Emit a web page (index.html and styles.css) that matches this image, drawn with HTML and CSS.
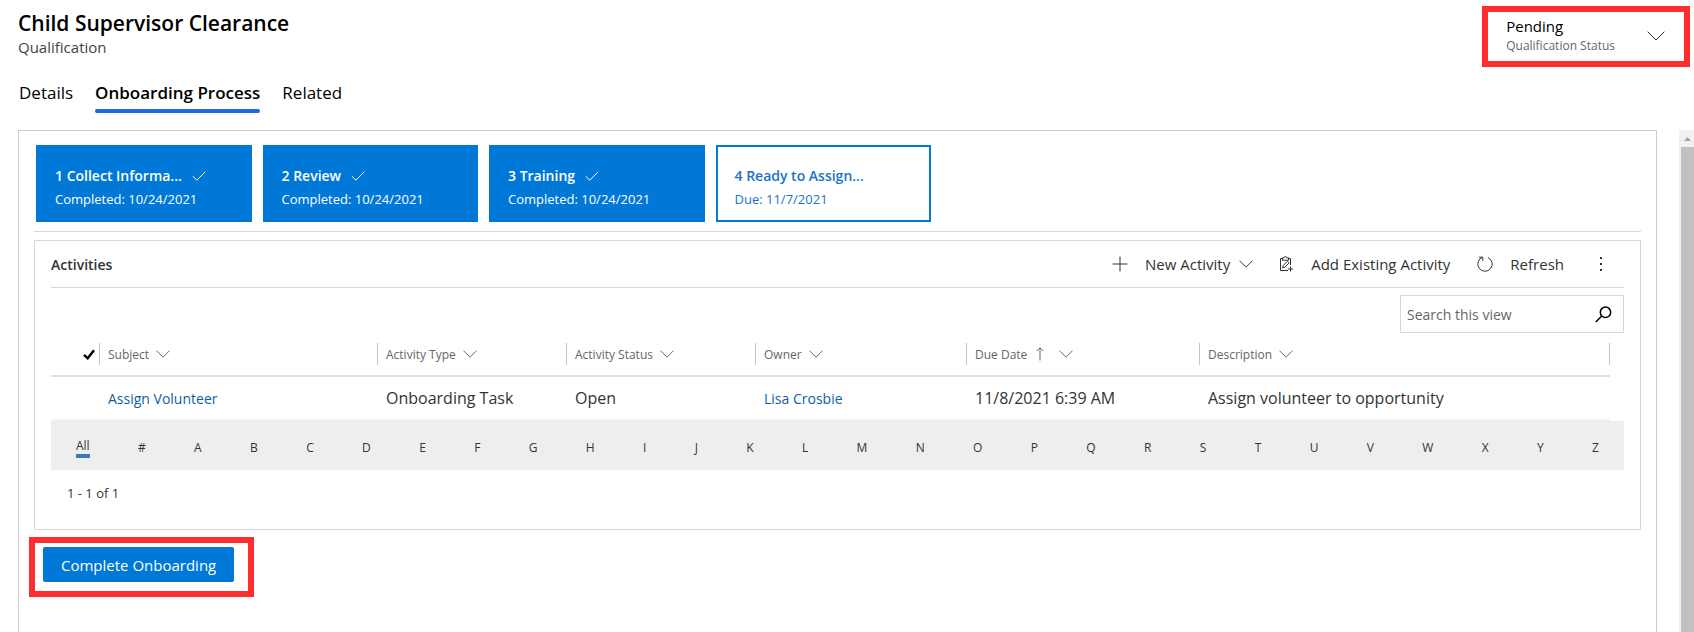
FILE: index.html
```html
<!DOCTYPE html>
<html lang="en">
<head>
<meta charset="utf-8">
<title>Child Supervisor Clearance</title>
<link rel="stylesheet" href="styles.css">
</head>
<body>
<svg class="sprite" aria-hidden="true">
  <symbol id="chevron" viewBox="0 0 14 8"><path d="M.5.7 7 7.2 13.5.7"/></symbol>
  <symbol id="check" viewBox="0 0 14 10"><path d="M.8 5.2 4.9 9.2 13.2.8"/></symbol>
</svg>
<div class="page">
  <header class="record-header">
    <div>
      <h1 class="record-title">Child Supervisor Clearance</h1>
      <p class="record-type">Qualification</p>
    </div>
    <button class="status highlight" type="button">
      <span class="status-text">
        <span class="status-value">Pending</span>
        <span class="status-label">Qualification Status</span>
      </span>
      <svg class="status-chevron" viewBox="0 0 18 10"><path d="M.6.7 9 9.1 17.4.7"/></svg>
    </button>
  </header>
  <nav class="tabs">
    <a class="tab" href="#details">Details</a>
    <a class="tab tab-active" href="#onboarding" aria-current="page">Onboarding Process</a>
    <a class="tab" href="#related">Related</a>
  </nav>
  <div class="viewport">
    <main class="form">
      <div class="process">
        <ol class="stages">
          <li class="stage"><div class="stage-title"><span class="stage-name">1 Collect Informa...</span><svg class="check"><use href="#check"/></svg></div><div class="stage-date">Completed: 10/24/2021</div></li>
          <li class="stage"><div class="stage-title"><span class="stage-name">2 Review</span><svg class="check"><use href="#check"/></svg></div><div class="stage-date">Completed: 10/24/2021</div></li>
          <li class="stage"><div class="stage-title"><span class="stage-name">3 Training</span><svg class="check"><use href="#check"/></svg></div><div class="stage-date">Completed: 10/24/2021</div></li>
          <li class="stage stage-current"><div class="stage-title"><span class="stage-name">4 Ready to Assign...</span></div><div class="stage-date">Due: 11/7/2021</div></li>
        </ol>
      </div>
      <section class="activities">
        <div class="toolbar">
          <h2 class="section-title">Activities</h2>
          <button class="command command-new" type="button">
            <svg class="icon" viewBox="0 0 16 16"><path d="M8 .5v15M.5 8h15"/></svg>
            <span>New Activity</span>
            <svg class="chevron"><use href="#chevron"/></svg>
          </button>
          <button class="command command-add" type="button">
            <svg class="icon" viewBox="0 0 16 16"><path d="M4.500 2.500h-2v12H10M10.500 2.500h2V9M4.500 1.800h1.700a1.300 1.300 0 0 1 2.600 0h1.700v2.400h-6zM4.500 12l.8-2.600 4.200-4.200 1.600 1.600-4.200 4.400zM12.500 10.500v5M10 13h5"/></svg>
            <span>Add Existing Activity</span>
          </button>
          <button class="command command-refresh" type="button">
            <svg class="icon" viewBox="0 0 16 16"><path d="M5.500 1.300a7.200 7.200 0 1 0 5.500.2M2 1.200h3.800V5"/></svg>
            <span>Refresh</span>
          </button>
          <button class="more" type="button" aria-label="More commands">
            <svg class="dots" viewBox="0 0 2 14"><path d="M0 0h2v2H0zM0 6h2v2H0zM0 12h2v2H0z"/></svg>
          </button>
        </div>
        <form class="search">
          <input class="search-input" type="text" placeholder="Search this view" aria-label="Search this view">
          <button class="search-button" type="button" aria-label="Search">
            <svg class="search-icon" viewBox="0 0 17 17"><circle cx="10.500" cy="6.300" r="5.200"/><path d="M6.800 10 .8 16"/></svg>
          </button>
        </form>
        <table class="grid">
          <colgroup><col class="col-check"><col class="col-subject"><col class="col-type"><col class="col-type"><col class="col-owner"><col class="col-due"><col></colgroup>
          <thead>
            <tr>
              <th class="select-all"><svg class="tick" viewBox="0 0 12 11"><path d="M1 5.800 4.700 9.300 11 1.200"/></svg></th>
              <th><span class="column">Subject <svg class="chevron"><use href="#chevron"/></svg></span></th>
              <th><span class="column">Activity Type <svg class="chevron"><use href="#chevron"/></svg></span></th>
              <th><span class="column">Activity Status <svg class="chevron"><use href="#chevron"/></svg></span></th>
              <th><span class="column">Owner <svg class="chevron"><use href="#chevron"/></svg></span></th>
              <th><span class="column">Due Date <svg class="sort" viewBox="0 0 8 14"><path d="M4 13.500V.8M.8 4 4 .8 7.200 4"/></svg> <svg class="chevron"><use href="#chevron"/></svg></span></th>
              <th><span class="column column-last">Description <svg class="chevron"><use href="#chevron"/></svg></span></th>
            </tr>
          </thead>
          <tbody>
            <tr>
              <td></td>
              <td><a class="record-link" href="#task">Assign Volunteer</a></td>
              <td>Onboarding Task</td>
              <td>Open</td>
              <td><a class="record-link" href="#owner">Lisa Crosbie</a></td>
              <td>11/8/2021 6:39 AM</td>
              <td>Assign volunteer to opportunity</td>
            </tr>
          </tbody>
        </table>
        <div class="jump-bar">
          <button class="jump jump-active" type="button">All</button>
          <button class="jump" type="button">#</button>
          <button class="jump" type="button">A</button>
          <button class="jump" type="button">B</button>
          <button class="jump" type="button">C</button>
          <button class="jump" type="button">D</button>
          <button class="jump" type="button">E</button>
          <button class="jump" type="button">F</button>
          <button class="jump" type="button">G</button>
          <button class="jump" type="button">H</button>
          <button class="jump" type="button">I</button>
          <button class="jump" type="button">J</button>
          <button class="jump" type="button">K</button>
          <button class="jump" type="button">L</button>
          <button class="jump" type="button">M</button>
          <button class="jump" type="button">N</button>
          <button class="jump" type="button">O</button>
          <button class="jump" type="button">P</button>
          <button class="jump" type="button">Q</button>
          <button class="jump" type="button">R</button>
          <button class="jump" type="button">S</button>
          <button class="jump" type="button">T</button>
          <button class="jump" type="button">U</button>
          <button class="jump" type="button">V</button>
          <button class="jump" type="button">W</button>
          <button class="jump" type="button">X</button>
          <button class="jump" type="button">Y</button>
          <button class="jump" type="button">Z</button>
        </div>
        <p class="paging">1 - 1 of 1</p>
      </section>
      <div class="action highlight">
        <button class="primary" type="button">Complete Onboarding</button>
      </div>
    </main>
    <div class="scrollbar">
      <svg class="scroll-arrow" viewBox="0 0 7 4"><path d="M3.500 0 7 4H0z"/></svg>
      <div class="scroll-thumb"></div>
    </div>
  </div>
</div>
</body>
</html>
```
FILE: styles.css
```css
* { box-sizing: border-box; }

body {
  margin: 0;
  background: #fff;
  color: #333;
  font-family: "Open Sans", "Noto Sans", sans-serif;
  font-size: 14px;
}

h1, h2, p, ol { margin: 0; padding: 0; }

button {
  border: 0;
  padding: 0;
  background: none;
  color: inherit;
  font: inherit;
  cursor: pointer;
}

a { text-decoration: none; }

svg { fill: none; stroke: currentColor; flex: none; }

.sprite { position: absolute; width: 0; height: 0; }

.page {
  height: 100vh;
  display: flex;
  flex-direction: column;
  overflow: hidden;
}

.highlight { border: 6px solid #ff2d2d; }

/* Record header */
.record-header {
  display: flex;
  justify-content: space-between;
  align-items: flex-start;
  padding: 6px 4px 0 18px;
}

.record-title {
  padding-top: 3px;
  color: #000;
  font-size: 21px;
  font-weight: 600;
  line-height: 28px;
}

.record-type {
  color: #444;
  font-size: 15px;
  line-height: 20px;
}

.status {
  display: flex;
  align-items: center;
  gap: 32px;
  height: 61px;
  padding: 0 19px 2px 18px;
  text-align: left;
}

.status-text { display: flex; flex-direction: column; }

.status-value { color: #000; font-size: 15px; font-weight: 500; line-height: 20px; }

.status-label { color: #666; font-size: 12px; line-height: 20px; }

.status-chevron { width: 18px; height: 10px; color: #222; }

/* Tabs */
.tabs {
  display: flex;
  gap: 22px;
  padding: 14px 19px 0;
}

.tab {
  padding-bottom: 4px;
  border-bottom: 4px solid transparent;
  color: #000;
  font-size: 17px;
  line-height: 24px;
}

.tab-active {
  position: relative;
  font-weight: 600;
}

.tab-active::after {
  content: "";
  position: absolute;
  left: 0;
  right: 0;
  bottom: -4px;
  height: 4px;
  border-radius: 2px;
  background: #2266e3;
}

/* Scrolling form */
.viewport {
  flex: 1;
  display: flex;
  margin-top: 17px;
  min-height: 0;
}

.form {
  flex: 1;
  margin: 0 22px 0 18px;
  padding: 14px 15px 0 15px;
  border: 1px solid #ccc;
  border-bottom: 0;
}

.process {
  padding: 0 0 9px 2px;
  border-bottom: 1px solid #d8d8d8;
}

.stages {
  display: grid;
  grid-template-columns: repeat(4, 1fr);
  gap: 11px;
  max-width: 895px;
  list-style: none;
}

.stage {
  height: 77px;
  padding: 18px 17px 0;
  border: 2px solid #0078d7;
  background: #0078d7;
  color: #fff;
}

.stage-current { background: #fff; color: #1a73c8; }

.stage-title {
  display: flex;
  align-items: center;
  gap: 10px;
  font-size: 14px;
  font-weight: 600;
  line-height: 22px;
}

.stage-date { font-size: 13px; line-height: 24px; }

.check { width: 14px; height: 10px; }

/* Activities sub-grid */
.activities {
  margin-top: 8px;
  padding: 0 16px;
  border: 1px solid #d8d8d8;
}

.toolbar {
  display: flex;
  align-items: center;
  height: 47px;
  border-bottom: 1px solid #d8d8d8;
  font-size: 15px;
}

.section-title {
  margin-right: auto;
  font-size: 14px;
  font-weight: 600;
}

.command { display: flex; align-items: center; }

.icon { width: 16px; height: 16px; margin-right: 17px; }

.command-add { margin-left: 25px; }

.command-refresh { margin-left: 27px; }

.chevron { width: 14px; height: 8px; }

.command-new .chevron { margin-left: 9px; }

.more { display: flex; margin: 0 22px 0 36px; }

.dots { width: 2px; height: 14px; fill: currentColor; stroke: none; }

.search {
  display: flex;
  align-items: center;
  width: 224px;
  height: 38px;
  margin: 7px 0 0 auto;
  border: 1px solid #d8d8d8;
}

.search-input {
  flex: 1;
  min-width: 0;
  padding: 0 6px;
  border: 0;
  outline: 0;
  color: #333;
  font: inherit;
}

.search-input::placeholder { color: #666; opacity: 1; }

.search-button { display: flex; margin-right: 11px; }

.search-icon { width: 17px; height: 17px; color: #000; stroke-width: 1.5; }

.grid {
  width: calc(100% - 14px);
  border-collapse: collapse;
  table-layout: fixed;
}

.col-check { width: 48px; }
.col-subject { width: 278px; }
.col-type { width: 189px; }
.col-owner { width: 211px; }
.col-due { width: 233px; }

.grid th {
  height: 43px;
  padding: 0;
  border-bottom: 2px solid #e0e0e0;
  color: #666;
  font-size: 12px;
  font-weight: 400;
  text-align: left;
}

.grid .select-all { padding-left: 32px; }

.tick { display: block; width: 12px; height: 11px; color: #000; stroke-width: 2.4; }

.column {
  display: flex;
  align-items: center;
  gap: 7px;
  height: 22px;
  padding-left: 8px;
  border-left: 1px solid #c4c4c4;
}

.column-last { border-right: 1px solid #c4c4c4; }

.sort { width: 8px; height: 14px; margin: 0 8px 0 2px; }

.grid td {
  height: 44px;
  padding: 0 0 0 9px;
  font-size: 16px;
  border-bottom: 2px solid #f3f3f3;
}

.grid td:first-child { padding: 0; }

.record-link { color: #115ea3; font-size: 14px; }

.jump-bar {
  display: flex;
  align-items: center;
  justify-content: space-between;
  height: 49px;
  padding: 5px 25px 0;
  background: #eee;
}

.jump { font-size: 12px; line-height: 16px; }

.jump-active { border-bottom: 4px solid #3b79b7; }

.paging {
  padding: 14px 16px 27px;
  font-size: 13px;
  line-height: 18px;
}

.action {
  width: fit-content;
  margin: 7px 0 0 -5px;
  padding: 4px 14px 9px 8px;
}

.primary {
  display: block;
  height: 35px;
  padding: 0 18px;
  border-radius: 2px;
  background: #0078d7;
  color: #fff;
  font-size: 15px;
}

.scrollbar {
  display: flex;
  flex-direction: column;
  width: 15px;
  padding-left: 2px;
  background: #f1f1f1;
}

.scroll-arrow {
  width: 7px;
  height: 4px;
  margin: 7px 3px 6px;
  fill: #a3a3a3;
  stroke: none;
}

.scroll-thumb { flex: 1; background: #c1c1c1; }
```
